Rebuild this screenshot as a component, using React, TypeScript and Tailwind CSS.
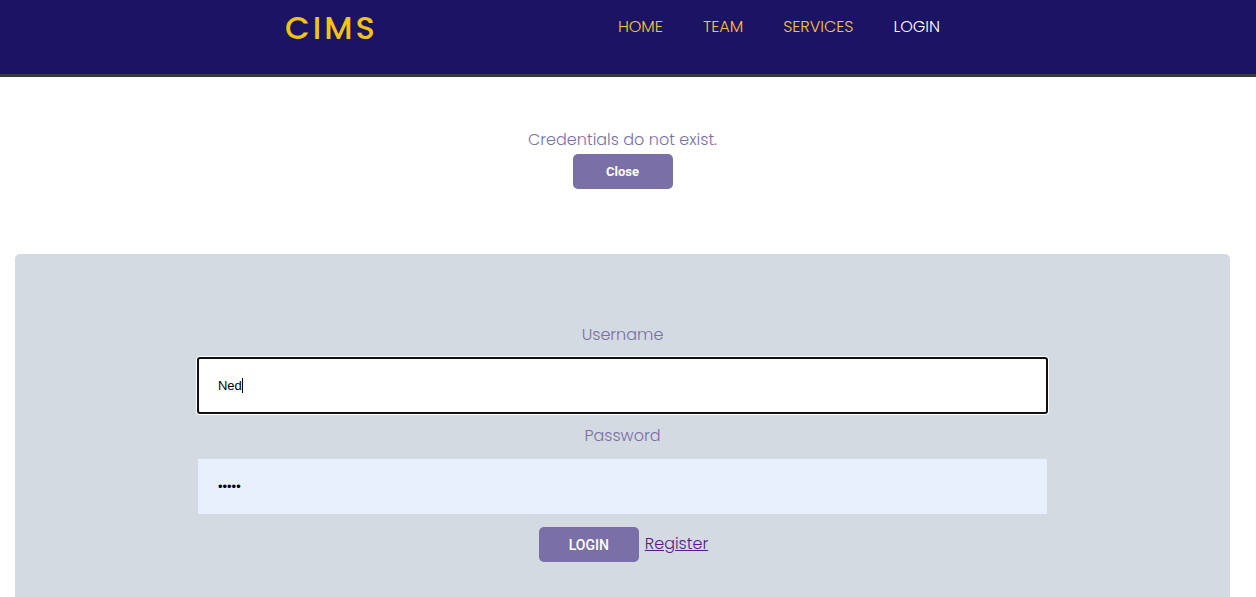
import { useState } from "react";
import type { ReactNode } from "react";

const links = [
  { label: "HOME", href: "#home", active: false },
  { label: "TEAM", href: "#team", active: false },
  { label: "SERVICES", href: "#services", active: false },
  { label: "LOGIN", href: "#login", active: true },
];

function Button({ type, onClick, children }: { type: "button" | "submit"; onClick?: () => void; children: ReactNode }) {
  return (
    <button
      type={type}
      onClick={onClick}
      className="h-[35px] w-[100px] cursor-pointer rounded-[5px] bg-[#7a6fa6] font-['Roboto',Arial,sans-serif] text-white"
    >
      {children}
    </button>
  );
}

export default function App() {
  const [username, setUsername] = useState("Ned");
  const [password, setPassword] = useState("abcde");
  const [showMessage, setShowMessage] = useState(true);

  return (
    <div className="flex min-h-screen flex-col bg-white font-['Poppins','Inter',sans-serif] text-base font-light text-[#7a6fa6]">
      <header className="border-b-[3px] border-[#3a3a3a] bg-[#1b1464] pr-[31px]">
        <div className="mx-auto flex h-[74px] max-w-[655px] items-start justify-between">
          <a href="#home" className="pt-2 text-[32px] leading-10 font-medium tracking-[3px] text-[#f1c40f]">
            CIMS
          </a>
          <nav className="flex gap-10 pt-[15px] leading-6">
            {links.map((link) => (
              <a key={link.label} href={link.href} className={link.active ? "text-white" : "text-[#fbc531]"}>
                {link.label}
              </a>
            ))}
          </nav>
        </div>
      </header>

      <main className="flex flex-1 flex-col pr-[26px] pl-[15px]">
        <section className="flex h-[177px] flex-col items-center pt-[50px]">
          {showMessage && (
            <>
              <p className="h-[27px] leading-[26px]">Credentials do not exist.</p>
              <Button type="button" onClick={() => setShowMessage(false)}>
                <span className="block text-[13px] font-bold">Close</span>
              </Button>
            </>
          )}
        </section>

        <form
          onSubmit={(event) => event.preventDefault()}
          className="flex flex-1 flex-col items-center rounded-t-[5px] bg-[#d3dae1] px-px pt-[67px] pb-[35px]"
        >
          <label htmlFor="username" className="leading-[27px]">
            Username
          </label>
          <div className="group relative mt-[10px] w-[70%] font-['Liberation_Sans',Arial,sans-serif] text-[13px] font-normal text-black">
            <input
              id="username"
              type="text"
              autoFocus
              value={username}
              onChange={(event) => setUsername(event.target.value)}
              className="block h-[55px] w-full rounded-[2px] bg-white px-5 caret-transparent ring-2 ring-white outline-2 -outline-offset-1 outline-[#101010]"
            />
            <div aria-hidden="true" className="pointer-events-none absolute inset-0 hidden items-center px-5 group-focus-within:flex">
              <span className="invisible whitespace-pre">{username}</span>
              <span className="h-[15px] w-px bg-black" />
            </div>
          </div>
          <label htmlFor="password" className="mt-[9px] leading-[27px]">
            Password
          </label>
          <input
            id="password"
            type="password"
            value={password}
            onChange={(event) => setPassword(event.target.value)}
            className="mt-[10px] h-[55px] w-[70%] bg-[#e8effd] px-5 font-['Liberation_Sans',Arial,sans-serif] text-[13px] font-normal text-black outline-none"
          />
          <div className="mt-[13px] flex items-start gap-[6px] pl-[2px]">
            <Button type="submit">
              <span className="block text-sm font-medium">LOGIN</span>
            </Button>
            <a href="#register" className="leading-[34px] text-[#551a8b] underline">
              Register
            </a>
          </div>
        </form>
      </main>
    </div>
  );
}
